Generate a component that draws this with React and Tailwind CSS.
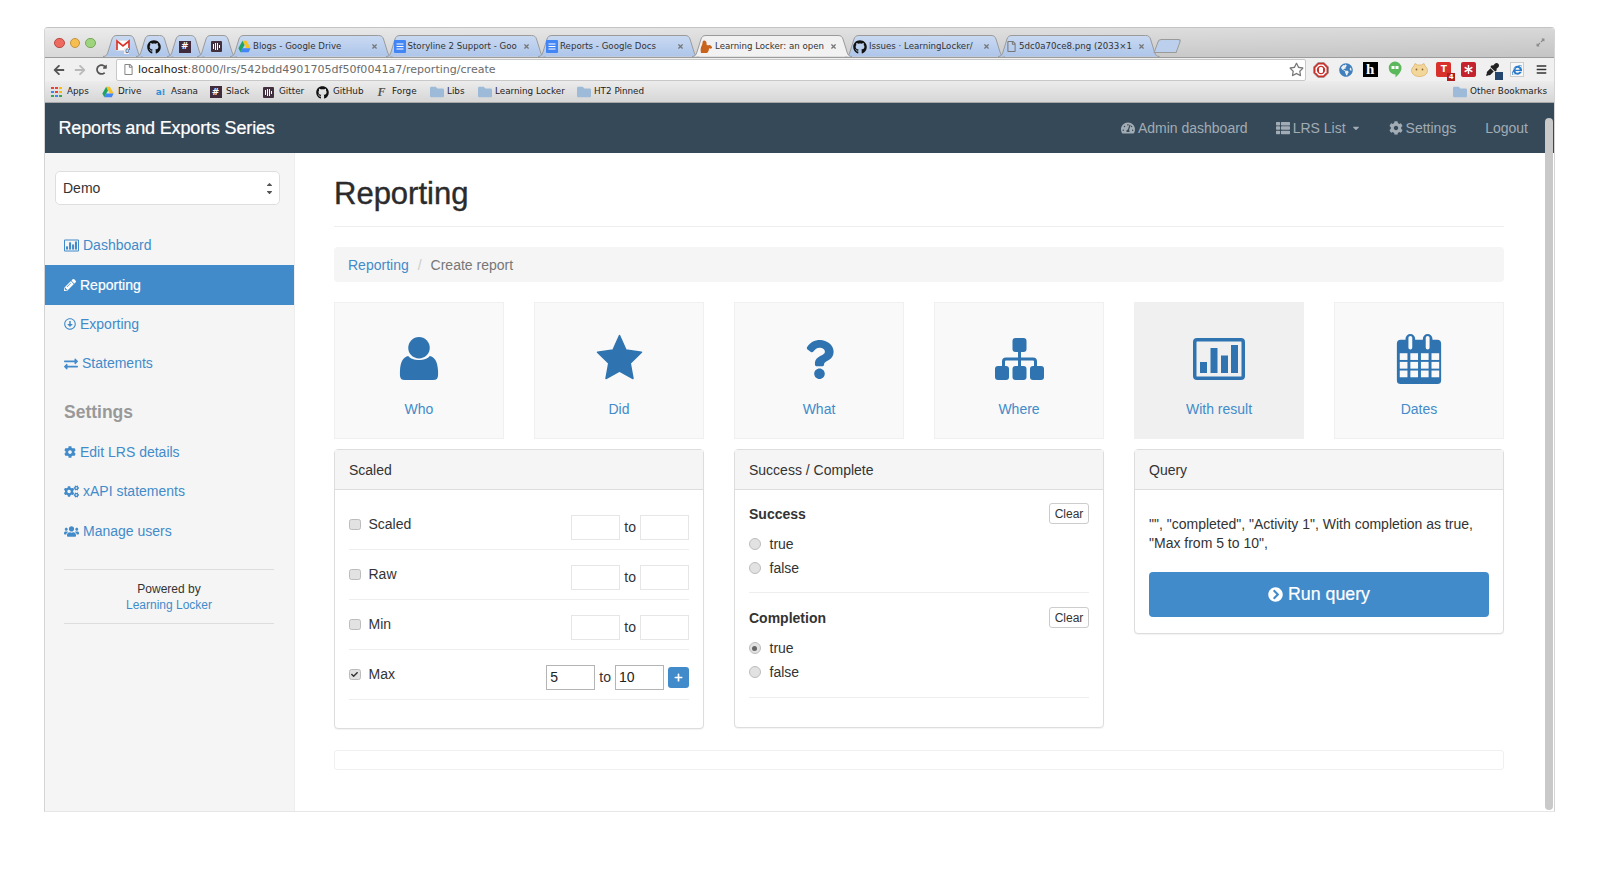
import React from "react";
import { FaQuestion, FaGithub, FaPencilAlt, FaRegArrowAltCircleDown, FaExchangeAlt, FaCog, FaCogs, FaUsers, FaTachometerAlt, FaThList, FaChevronCircleRight, FaPlus, FaArrowLeft, FaArrowRight, FaRedoAlt, FaRegStar, FaRegFile, FaCheck, FaGlobeAmericas, FaEyeDropper, FaBars, FaExpandAlt, FaSortUp, FaSortDown, FaCaretDown, FaTimes, FaAsterisk, FaInternetExplorer, FaFolder } from "react-icons/fa";

const TabShape = ({ w, active }) => (
  <svg className="absolute left-0 top-0 pointer-events-none" width={w + 12} height="22" viewBox={`0 0 ${w + 12} 22`}>
    <defs>
      <linearGradient id={active ? "tabA" : "tabI"} x1="0" y1="0" x2="0" y2="1">
        <stop offset="0" stopColor={active ? "#f1f1f1" : "#c9d9f1"} />
        <stop offset="1" stopColor={active ? "#f2f2f2" : "#aec6eb"} />
      </linearGradient>
    </defs>
    <path
      d={`M0 21.5 C3 21.5 4 20 5 17 L9 4 C10 1.5 11 .5 14 .5 L${w - 3} .5 C${w} .5 ${w + 1} 1.5 ${w + 2} 4 L${w + 6} 17 C${w + 7} 20 ${w + 8} 21.5 ${w + 11} 21.5`}
      fill={`url(#${active ? "tabA" : "tabI"})`}
      stroke="#9a9a9a"
      strokeWidth="1"
    />
  </svg>
);

const Drive = ({ s = 13 }) => (
  <svg width={s} height={s} viewBox="0 0 16 16" className="shrink-0">
    <path d="M5.5 1h5l5 9h-5z" fill="#f6c324" />
    <path d="M5.5 1 .5 10 3 15l5-9z" fill="#1ea362" />
    <path d="M3 15h10l2.5-5h-10z" fill="#4285f4" />
  </svg>
);
const Docs = () => (
  <svg width="12" height="13" viewBox="0 0 12 13" className="shrink-0">
    <rect width="12" height="13" rx="1" fill="#4285f4" />
    <path d="M2.5 4h7M2.5 6.5h7M2.5 9h7" stroke="#fff" strokeWidth="1" />
  </svg>
);
const Hash = ({ s = 13 }) => (
  <span className="flex shrink-0 items-center justify-center bg-[#3f2b3c] font-bold leading-none text-white" style={{ width: s, height: s, fontSize: s - 3 }}>#</span>
);
const Gitter = ({ s = 13 }) => (
  <span className="flex shrink-0 items-center justify-center gap-[1px] rounded-[1px] bg-[#43303f]" style={{ width: s, height: s }}>
    <span className="h-[5px] w-[1px] bg-white" />
    <span className="h-[7px] w-[1px] bg-white" />
    <span className="h-[7px] w-[1px] bg-white" />
    <span className="h-[3px] w-[1px] bg-white" />
  </span>
);
const Gmail = () => (
  <svg width="14" height="15" viewBox="0 0 14 15" className="shrink-0">
    <rect x=".5" y="1.5" width="13" height="10" fill="#fff" stroke="#ddd" strokeWidth=".6" />
    <path d="M1 11V2l6 5 6-5v9" fill="none" stroke="#d9352a" strokeWidth="1.7" />
    <rect x="8" y="9" width="5" height="6" fill="#eee" />
    <text x="9.2" y="14.4" fontSize="6" fill="#222" fontFamily="DejaVu Sans">0</text>
  </svg>
);
const Squirrel = () => (
  <svg width="13" height="14" viewBox="0 0 13 14" className="shrink-0">
    <path d="M1 13c-1-4 0-6 1-8S2 1 4 .5c2 0 3 2 2.500 4 1 1 2 1 3 .5 1 0 3 2 2.500 3-1 1-2 .5-3 .5 0 2-1 4-2 4.500z" fill="#c9641f" />
  </svg>
);

const tabs = [
  { w: 33, kind: "pin", icon: <Gmail /> },
  { w: 30.5, kind: "pin", icon: <FaGithub size={14} color="#111" /> },
  { w: 30.5, kind: "pin", icon: <Hash s={12} /> },
  { w: 33, kind: "pin", icon: <Gitter s={11} /> },
  { w: 155.5, label: "Blogs - Google Drive", icon: <Drive /> },
  { w: 152.5, label: "Storyline 2 Support - Goo", icon: <Docs /> },
  { w: 154, label: "Reports - Google Docs", icon: <Docs /> },
  { w: 153, label: "Learning Locker: an open", icon: <Squirrel />, active: true },
  { w: 153, label: "Issues · LearningLocker/", icon: <FaGithub size={14} color="#111" /> },
  { w: 154.5, label: "5dc0a70ce8.png (2033×1", icon: <FaRegFile size={11} color="#777" /> },
];

const Tab = ({ t }) => (
  <div className={`relative h-[22px] shrink-0 ${t.active ? "z-10" : ""}`} style={{ width: t.w }}>
    <TabShape w={t.w - 4} active={t.active} />
    <div className={`relative flex h-full items-center pt-[1px] ${t.kind === "pin" ? "justify-center pl-[6px]" : "pl-[8px] pr-[8px]"}`}>
      {t.icon}
      {t.label && (
        <>
          <span className="ml-[2px] min-w-0 flex-1 whitespace-nowrap text-[8.650px] text-[#333]">{t.label}</span>
          <FaTimes size={7} className="ml-[2px] shrink-0 text-[#777]" />
        </>
      )}
    </div>
  </div>
);

const BMFolder = () => <FaFolder size={14} className="shrink-0 text-[#9dbbd8]" />;
const Apps = () => (
  <span className="grid h-[11px] w-[11px] shrink-0 grid-cols-3 gap-[1.5px]">
    {["#ea4335", "#ea4335", "#fbbc05", "#4285f4", "#ea4335", "#fbbc05", "#34a853", "#4285f4", "#34a853"].map((c, i) => (
      <span key={i} className="h-[2.5px] w-[2.5px]" style={{ background: c }} />
    ))}
  </span>
);
const Bm = ({ icon, label, className }) => (
  <div className={`flex items-center gap-[4px] text-[8.800px] text-[#222] ${className}`}>
    <span className="flex w-[13px] shrink-0 items-center justify-center">{icon}</span>
    <span className="whitespace-nowrap">{label}</span>
  </div>
);

const ChartIcon = ({ w = 15, h = 13 }) => (
  <svg width={w} height={h} viewBox="0 0 52 42" fill="currentColor" className="shrink-0">
    <path fillRule="evenodd" d="M4 0h44a4 4 0 0 1 4 4v34a4 4 0 0 1-4 4H4a4 4 0 0 1-4-4V4a4 4 0 0 1 4-4zm0 3.500a.5.500 0 0 0-.5.500v34a.5.500 0 0 0 .5.500h44a.5.500 0 0 0 .5-.5V4a.5.500 0 0 0-.5-.5z" />
    <rect x="7" y="24" width="7" height="11" />
    <rect x="17.500" y="10" width="7" height="25" />
    <rect x="28" y="17.500" width="7" height="17.500" />
    <rect x="38" y="7" width="7" height="28" />
  </svg>
);
const UserIcon = () => (
  <svg width="40" height="44" viewBox="0 0 40 45" fill="currentColor">
    <circle cx="20" cy="11" r="11" />
    <path d="M9 19.500C13 25 27 25 31 19.500 36 20.500 39 25 39.500 35v4q0 5-5 5H5.500q-5 0-5-5v-4C1 25 4 20.500 9 19.500z" />
  </svg>
);
const StarIcon = () => (
  <svg width="47" height="46" viewBox="0 0 47 46" fill="currentColor" className="-translate-y-[2px]">
    <path d="M23.500 1.500 30 16l15.500 2.200-11.300 11 2.800 15.300-13.500-7.500L10 44.500l2.800-15.300L1.500 18.200 17 16z" stroke="currentColor" strokeWidth="1.500" strokeLinejoin="round" />
  </svg>
);
const SitemapIcon = () => (
  <svg width="49" height="42" viewBox="0 0 49 42" fill="currentColor">
    <rect x="17.500" y="0" width="14" height="14" rx="3" />
    <path d="M23 13h3v6.500h12a4 4 0 0 1 4 4V29h-3v-5.500a1 1 0 0 0-1-1H26V29h-3v-6.500H11a1 1 0 0 0-1 1V29H7v-5.500a4 4 0 0 1 4-4h12z" />
    <rect x="0" y="28" width="14" height="14" rx="3" />
    <rect x="17.500" y="28" width="14" height="14" rx="3" />
    <rect x="35" y="28" width="14" height="14" rx="3" />
  </svg>
);
const CalendarIcon = () => (
  <svg width="46" height="50" viewBox="0 0 46 52" fill="currentColor">
    <path fillRule="evenodd" d="M4 6h5V5a5 5 0 0 1 10 0v1h8V5a5 5 0 0 1 10 0v1h5a4 4 0 0 1 4 4v38a4 4 0 0 1-4 4H4a4 4 0 0 1-4-4V10a4 4 0 0 1 4-4zM12 4v10a2 2 0 0 0 4 0V4a2 2 0 0 0-4 0zm18 0v10a2 2 0 0 0 4 0V4a2 2 0 0 0-4 0z" />
    <g fill="#f9f9f9">
      {[20, 29, 38].map((y) => [3, 14, 25, 36].map((x) => <rect key={x + "-" + y} x={x} y={y} width="8" height="7" />))}
    </g>
  </svg>
);
const StopIcon = () => (
  <svg width="16" height="16" viewBox="0 0 16 16">
    <path d="M5 .5h6L15.500 5v6L11 15.500H5L.5 11V5z" fill="#c9302c" stroke="#8f8f8f" strokeWidth=".6" />
    <path d="M5.700 2.500h4.600l3.200 3.200v4.600l-3.200 3.200H5.700l-3.200-3.200V5.700z" fill="#fff" />
    <circle cx="8" cy="8" r="4.200" fill="#c9302c" />
    <rect x="6" y="5" width="4" height="6" rx="1.500" fill="#fff" />
  </svg>
);
const HangoutsIcon = () => (
  <svg width="14" height="17" viewBox="0 0 14 17">
    <path d="M7 .5a6.500 6.500 0 0 1 6.500 6.500c0 4-3.500 7-6 9.500V13.500A6.500 6.500 0 0 1 7 .5z" fill="#5cb85c" />
    <rect x="3.500" y="5" width="3" height="3" fill="#fff" />
    <rect x="7.500" y="5" width="3" height="3" fill="#fff" />
  </svg>
);
const CatIcon = () => (
  <svg width="17" height="14" viewBox="0 0 17 14">
    <path d="M3 3 4 .5 6.500 2h4L13 .5 14 3c2 1.500 2.500 3.500 2.500 4.500C16.500 11 13 13.500 8.500 13.500S.5 11 .5 7.500C.5 6.500 1 4.500 3 3z" fill="#f3d79a" stroke="#d8ad62" strokeWidth=".7" />
    <circle cx="5.500" cy="6.500" r=".9" fill="#8a6a34" />
    <circle cx="11.500" cy="6.500" r=".9" fill="#8a6a34" />
  </svg>
);

const tiles = [
  { label: "Who", icon: <UserIcon /> },
  { label: "Did", icon: <StarIcon /> },
  { label: "What", icon: <FaQuestion size={39} /> },
  { label: "Where", icon: <SitemapIcon /> },
  { label: "With result", icon: <ChartIcon w={52} h={42} />, active: true },
  { label: "Dates", icon: <CalendarIcon /> },
];

const NavItem = ({ icon, label, active, gap = "gap-[4px]" }) => (
  <a className={`flex h-[39.4px] items-center ${gap} pl-[19px] text-[14px] ${active ? "bg-[#428bca] text-white [-webkit-text-stroke:0.2px_#ffffff]" : "text-[#428bca]"}`}>
    {icon}
    <span>{label}</span>
  </a>
);

const Check = ({ on }) => (
  <span className="flex h-[11.500px] w-[11.500px] shrink-0 items-center justify-center rounded-[2.5px] border border-[#bcbcbc] bg-[#e2e2e2]">
    {on && <FaCheck size={7} className="text-[#333]" />}
  </span>
);
const Radio = ({ on }) => (
  <span className="flex h-[11.500px] w-[11.500px] shrink-0 items-center justify-center rounded-full border border-[#bcbcbc] bg-[#e2e2e2]">
    {on && <span className="h-[5px] w-[5px] rounded-full bg-[#666]" />}
  </span>
);

const Field = ({ value, dark }) => (
  <input
    readOnly
    value={value || ""}
    className={`h-[25px] w-[49px] border px-[3px] text-[14px] text-[#222] outline-none ${dark ? "border-[#b4b4b4]" : "border-[#e6e6e6]"}`}
  />
);

const RangeRow = ({ label, on }) => (
  <div className="flex h-[50px] items-center border-b border-[#eeeeee]">
    <Check on={on} />
    <span className="ml-[8px] text-[14px] text-[#333]">{label}</span>
    <div className="ml-auto mt-[5px] flex items-center">
      <Field value={on ? "5" : ""} dark={on} />
      <span className="mx-[4px] text-[14px] text-[#333]">to</span>
      <Field value={on ? "10" : ""} dark={on} />
      {on && (
        <span className="ml-[4px] flex h-[21px] w-[21px] items-center justify-center rounded-[3px] bg-[#428bca]">
          <FaPlus size={9} className="text-white" />
        </span>
      )}
    </div>
  </div>
);

const Panel = ({ title, className = "", children }) => (
  <div className={`rounded-[4px] border border-[#dddddd] bg-white shadow-[0_1px_1px_rgba(0,0,0,0.05)] ${className}`}>
    <div className="flex h-[40px] items-center border-b border-[#dddddd] bg-[#f5f5f5] px-[14px] pt-[2px] text-[14px] text-[#333]">{title}</div>
    {children}
  </div>
);

const RadioGroup = ({ title, picked, h }) => (
  <div className={`border-b border-[#eeeeee] ${h}`}>
    <div className="flex h-[21px] items-center justify-between">
      <span className="translate-y-[1px] text-[14px] font-bold text-[#333]">{title}</span>
      <button className="h-[21px] w-[40px] rounded-[3px] border border-[#cccccc] bg-white text-[12px] text-[#333]">Clear</button>
    </div>
    <div className="mt-[10px] flex h-[20px] items-center gap-[9px] text-[14px] text-[#333]">
      <Radio on={picked === "true"} />
      <span>true</span>
    </div>
    <div className="mt-[4px] flex h-[20px] items-center gap-[9px] text-[14px] text-[#333]">
      <Radio on={picked === "false"} />
      <span>false</span>
    </div>
  </div>
);

const Ext = ({ children }) => <span className="flex h-[22px] w-[24.5px] items-center justify-center">{children}</span>;

export default function App() {
  return (
    <div className="min-h-[874px] w-[1600px] overflow-hidden bg-white pl-[44px] pt-[27px] font-['Liberation_Sans',Arial,sans-serif]">
      <div className="relative flex h-[785px] w-[1511px] flex-col overflow-hidden rounded-t-[4px] border border-t-[#c4c4c4] border-x-[#d4d4d4] border-b-[#e6e6e6] bg-white">
        {/* browser chrome */}
        <div className="font-['DejaVu_Sans',sans-serif]">
          <div className="flex h-[29px] items-end bg-gradient-to-br from-[#ececec] via-[#d8d8d8] to-[#c4c4c4] pl-[9px]">
            <div className="mb-[9px] flex w-[49px] shrink-0 items-center gap-[5px]">
              <span className="h-[10.500px] w-[10.500px] rounded-full border border-[#b94a45] bg-[#ee6a5f]" />
              <span className="h-[10.500px] w-[10.500px] rounded-full border border-[#c59240] bg-[#f6bd4f]" />
              <span className="h-[10.500px] w-[10.500px] rounded-full border border-[#78a85c] bg-[#9fd47e]" />
            </div>
            {tabs.map((t, i) => <Tab key={i} t={t} />)}
            <div className="relative mb-[4px] ml-[3px] h-[14px] w-[23px] -skew-x-[20deg] rounded-t-[3px] border border-[#9a9a9a] bg-[#bcd0ee]" />
            <FaExpandAlt size={9} className="mb-[10px] ml-auto mr-[9px] text-[#8a8a8a]" />
          </div>
          <div className="flex h-[24px] items-center border-t border-[#9c9c9c] bg-[#f0f0f0] pl-[8px]">
            <FaArrowLeft size={12} className="text-[#555]" />
            <FaArrowRight size={12} className="ml-[9px] text-[#b9b9b9]" />
            <FaRedoAlt size={11} className="ml-[10px] text-[#555]" />
            <div className="ml-[9px] flex h-[22px] w-[1192px] items-center rounded-[2px] border border-[#c8c8c8] bg-white pl-[6px]">
              <FaRegFile size={11} className="text-[#888]" />
              <span className="ml-[4px] whitespace-nowrap pt-[1px] text-[11.060px] text-[#222]">
                localhost<span className="text-[#6b6b6b]">:8000/lrs/542bdd4901705df50f0041a7/reporting/create</span>
              </span>
              <FaRegStar size={15} className="ml-auto mr-[1px] text-[#777]" />
            </div>
            <div className="ml-[3px] flex items-center">
              <Ext><StopIcon /></Ext>
              <Ext><FaGlobeAmericas size={14} className="text-[#3f7fbd]" /></Ext>
              <Ext><span className="flex h-[15px] w-[15px] items-center justify-center bg-black font-['Liberation_Serif',serif] text-[15px] font-bold leading-none text-white">h</span></Ext>
              <Ext><HangoutsIcon /></Ext>
              <Ext><CatIcon /></Ext>
              <Ext>
                <span className="relative flex h-[15px] w-[15px] items-center justify-center rounded-[2px] bg-[#d8302a] text-[9px] font-bold text-white">
                  T
                  <span className="absolute -bottom-[4px] -right-[4px] flex h-[8px] w-[8px] items-center justify-center bg-[#b01e1e] text-[7px] leading-none">4</span>
                </span>
              </Ext>
              <Ext><span className="flex h-[15px] w-[15px] items-center justify-center rounded-[2px] bg-[#c4222c]"><FaAsterisk size={9} className="text-white" /></span></Ext>
              <Ext>
                <span className="relative">
                  <FaEyeDropper size={13} className="text-[#222]" />
                  <span className="absolute -bottom-[4px] -right-[4px] h-[8px] w-[8px] bg-[#23466e]" />
                </span>
              </Ext>
              <Ext><span className="flex h-[15px] w-[14px] items-center justify-center border border-[#ccc] bg-[#f8f8f8]"><FaInternetExplorer size={10} className="text-[#2b7cc9]" /></span></Ext>
              <Ext><FaBars size={11} className="text-[#333]" /></Ext>
            </div>
          </div>
          <div className="flex h-[22px] items-center border-b border-[#a8a8a8] bg-gradient-to-b from-[#ececec] to-[#d6d6d6] pt-[1px]">
            <Bm className="w-[55px] pl-[5px]" icon={<Apps />} label="Apps" />
            <Bm className="ml-[1px] w-[53px]" icon={<Drive s={12} />} label="Drive" />
            <Bm className="w-[55px]" icon={<span className="text-[9px] font-bold leading-none text-[#2e8fd8]">a⁝</span>} label="Asana" />
            <Bm className="w-[53px]" icon={<Hash s={12} />} label="Slack" />
            <Bm className="w-[54px]" icon={<Gitter s={11} />} label="Gitter" />
            <Bm className="w-[59px]" icon={<FaGithub size={13} color="#111" />} label="GitHub" />
            <Bm className="w-[55px]" icon={<span className="font-['Liberation_Serif',serif] text-[12px] font-bold italic leading-none text-[#555]">F</span>} label="Forge" />
            <Bm className="w-[48px]" icon={<BMFolder />} label="Libs" />
            <Bm className="w-[99px]" icon={<BMFolder />} label="Learning Locker" />
            <Bm className="" icon={<BMFolder />} label="HT2 Pinned" />
            <Bm className="ml-auto mr-[7px]" icon={<BMFolder />} label="Other Bookmarks" />
          </div>
        </div>

        {/* navbar */}
        <div className="flex h-[50px] shrink-0 items-center bg-[#364958] pl-[13.500px] pr-[26px]">
          <span className="text-[18px] tracking-[-0.15px] text-white [-webkit-text-stroke:0.2px_#ffffff]">Reports and Exports Series</span>
          <div className="ml-auto flex items-center gap-[28px] text-[14px] text-[#a2acb4]">
            <span className="flex items-center gap-[3px]"><FaTachometerAlt size={14} />Admin dashboard</span>
            <span className="flex items-center gap-[3px]"><FaThList size={14} />LRS List<FaCaretDown size={10} className="ml-[2px]" /></span>
            <span className="flex items-center gap-[3px]"><FaCog size={14} />Settings</span>
            <span className="ml-[1px]">Logout</span>
          </div>
        </div>

        {/* body */}
        <div className="flex min-h-0 flex-1">
          <aside className="w-[250px] shrink-0 border-r border-[#eeeeee] bg-[#f5f5f5]">
            <div className="ml-[10px] mt-[18px] flex h-[34px] w-[225px] items-center justify-between rounded-[5px] border border-[#dedede] bg-white pl-[7px] pr-[5px] text-[14px] text-[#333]">
              <span>Demo</span>
              <span className="flex flex-col text-[#555]">
                <FaSortUp size={9} className="-mb-[5px]" />
                <FaSortDown size={9} />
              </span>
            </div>
            <div className="mt-[21px]">
              <NavItem icon={<ChartIcon w={15} h={13} />} label="Dashboard" />
              <NavItem active icon={<FaPencilAlt size={12} />} label="Reporting" />
              <NavItem icon={<FaRegArrowAltCircleDown size={12} />} label="Exporting" />
              <NavItem icon={<FaExchangeAlt size={14} />} label="Statements" />
            </div>
            <h3 className="ml-[19px] mt-[18px] text-[17.500px] font-bold leading-[20px] text-[#999999]">Settings</h3>
            <div className="mt-[11px]">
              <NavItem icon={<FaCog size={12} />} label="Edit LRS details" />
              <NavItem icon={<FaCogs size={15} />} label="xAPI statements" />
              <NavItem icon={<FaUsers size={15} />} label="Manage users" />
            </div>
            <div className="ml-[19px] mt-[18px] w-[210px] border-y border-[#dddddd] pb-[9px] pt-[11px] text-center text-[12px] leading-[16.500px] text-[#333]">
              <div>Powered by</div>
              <div className="text-[#428bca]">Learning Locker</div>
            </div>
          </aside>

          <main className="min-w-0 flex-1 pl-[39px] pr-[50px]">
            <h1 className="mt-[24px] text-[31px] leading-[34px] text-[#2b2b2b] [-webkit-text-stroke:0.4px_#2b2b2b]">Reporting</h1>
            <div className="mt-[15px] h-[1px] bg-[#eeeeee]" />
            <div className="mt-[20px] flex h-[35px] items-center rounded-[4px] bg-[#f5f5f5] px-[14px] pt-[1px] text-[14px]">
              <span className="text-[#428bca]">Reporting</span>
              <span className="mx-[9px] text-[#cccccc]">/</span>
              <span className="text-[#777777]">Create report</span>
            </div>
            <div className="mt-[20px] grid grid-cols-6 gap-[30px]">
              {tiles.map((t) => (
                <div key={t.label} className={`flex h-[137px] flex-col items-center border border-[#f0f0f0] ${t.active ? "bg-[#f0f0f0]" : "bg-[#f9f9f9]"}`}>
                  <div className="flex h-[96px] items-center pt-[16px] text-[#2f74b0]">{t.icon}</div>
                  <span className="text-[14px] text-[#428bca]">{t.label}</span>
                </div>
              ))}
            </div>
            <div className="mt-[10px] grid grid-cols-3 items-start gap-[30px]">
              <Panel title="Scaled" className="h-[280px]">
                <div className="px-[14px] pt-[10px]">
                  <RangeRow label="Scaled" />
                  <RangeRow label="Raw" />
                  <RangeRow label="Min" />
                  <RangeRow label="Max" on />
                </div>
              </Panel>
              <Panel title="Success / Complete" className="h-[279px]">
                <div className="px-[14px] pt-[13px]">
                  <RadioGroup title="Success" h="h-[90px]" />
                  <div className="mt-[14px]">
                    <RadioGroup title="Completion" picked="true" h="h-[91px]" />
                  </div>
                </div>
              </Panel>
              <Panel title="Query" className="h-[185px]">
                <div className="px-[14px] pt-[25px]">
                  <p className="text-[14px] leading-[19px] text-[#333]">"", "completed", "Activity 1", With completion as true, "Max from 5 to 10",</p>
                  <button className="mt-[19px] flex h-[45px] w-full items-center justify-center gap-[5px] rounded-[4px] bg-[#428bca] text-[17.800px] text-white [-webkit-text-stroke:0.2px_#ffffff]">
                    <FaChevronCircleRight size={15} />Run query
                  </button>
                </div>
              </Panel>
            </div>
            <div className="mt-[21px] h-[20px] rounded-[3px] border border-[#f0f0f0]" />
          </main>
        </div>

        {/* overlay scrollbar */}
        <div className="absolute bottom-[1px] right-[1px] top-[90px] w-[8px] rounded-full bg-[#c9c9c9]" />
      </div>
    </div>
  );
}
